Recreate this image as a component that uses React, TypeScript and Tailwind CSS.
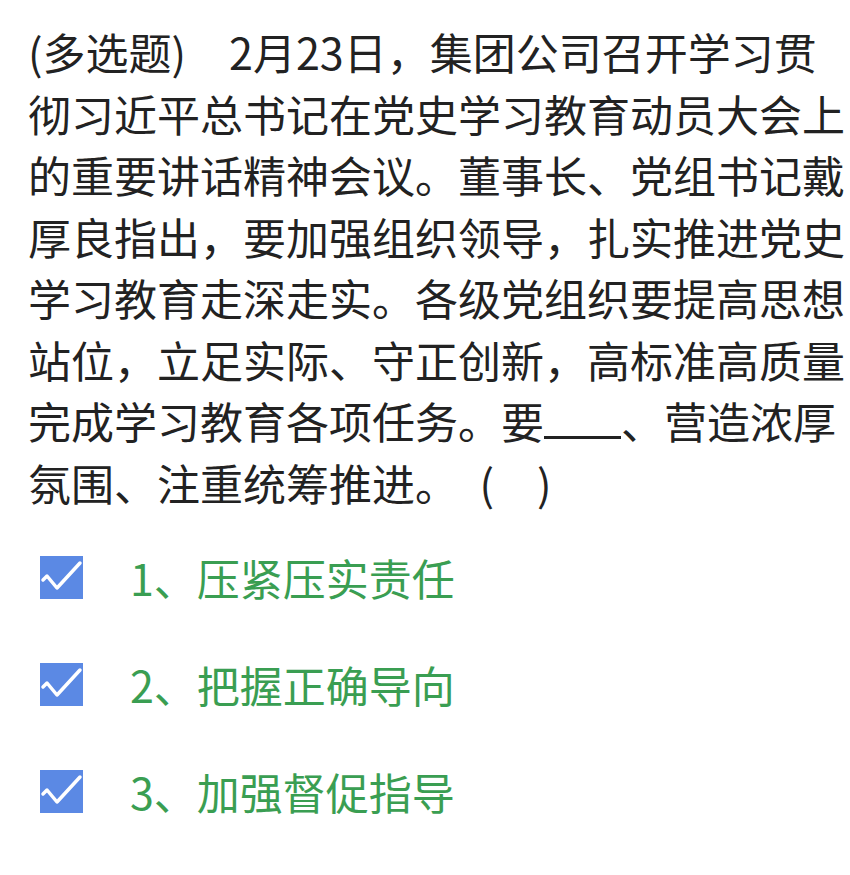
const lines = [
  '(多选题)　2月23日，集团公司召开学习贯',
  '彻习近平总书记在党史学习教育动员大会上',
  '的重要讲话精神会议。董事长、党组书记戴',
  '厚良指出，要加强组织领导，扎实推进党史',
  '学习教育走深走实。各级党组织要提高思想',
  '站位，立足实际、守正创新，高标准高质量',
];

const options = ['1、压紧压实责任', '2、把握正确导向', '3、加强督促指导', '4、营造浓厚氛围'];

function CheckBox() {
  return (
    <svg width="43" height="43" viewBox="0 0 43 43" className="shrink-0">
      <rect x="0" y="0" width="43" height="43" fill="#5b89e4" />
      <polyline
        points="3,24 7,20 17,32 40,7"
        fill="none"
        stroke="#ffffff"
        strokeWidth="3.5"
        strokeLinecap="round"
        strokeLinejoin="round"
      />
    </svg>
  );
}

export default function App() {
  return (
    <div
      className="w-[850px] h-[875px] overflow-hidden bg-white"
      style={{ fontFamily: '"Noto Sans CJK SC", "Noto Sans", sans-serif' }}
    >
      {/* 题干 */}
      <div className="pt-[21px] pl-[28px] text-[43px] leading-[61.5px] text-[#222222] whitespace-nowrap">
        {lines.map((l) => (
          <div key={l}>{l}</div>
        ))}
        <div>
          完成学习教育各项任务。要
          <span className="inline-block w-[77px] h-[3px] bg-[#222222] align-baseline" />
          、营造浓厚
        </div>
        <div>氛围、注重统筹推进。　(　)</div>
      </div>

      {/* 选项 */}
      <div className="mt-[11px] flex flex-col">
        {options.map((o) => (
          <div key={o} className="h-[107px] flex items-center pl-[40px] gap-[47px]">
            <CheckBox />
            <span className="text-[43px] text-[#3a9e52] whitespace-nowrap">{o}</span>
          </div>
        ))}
      </div>
    </div>
  );
}
